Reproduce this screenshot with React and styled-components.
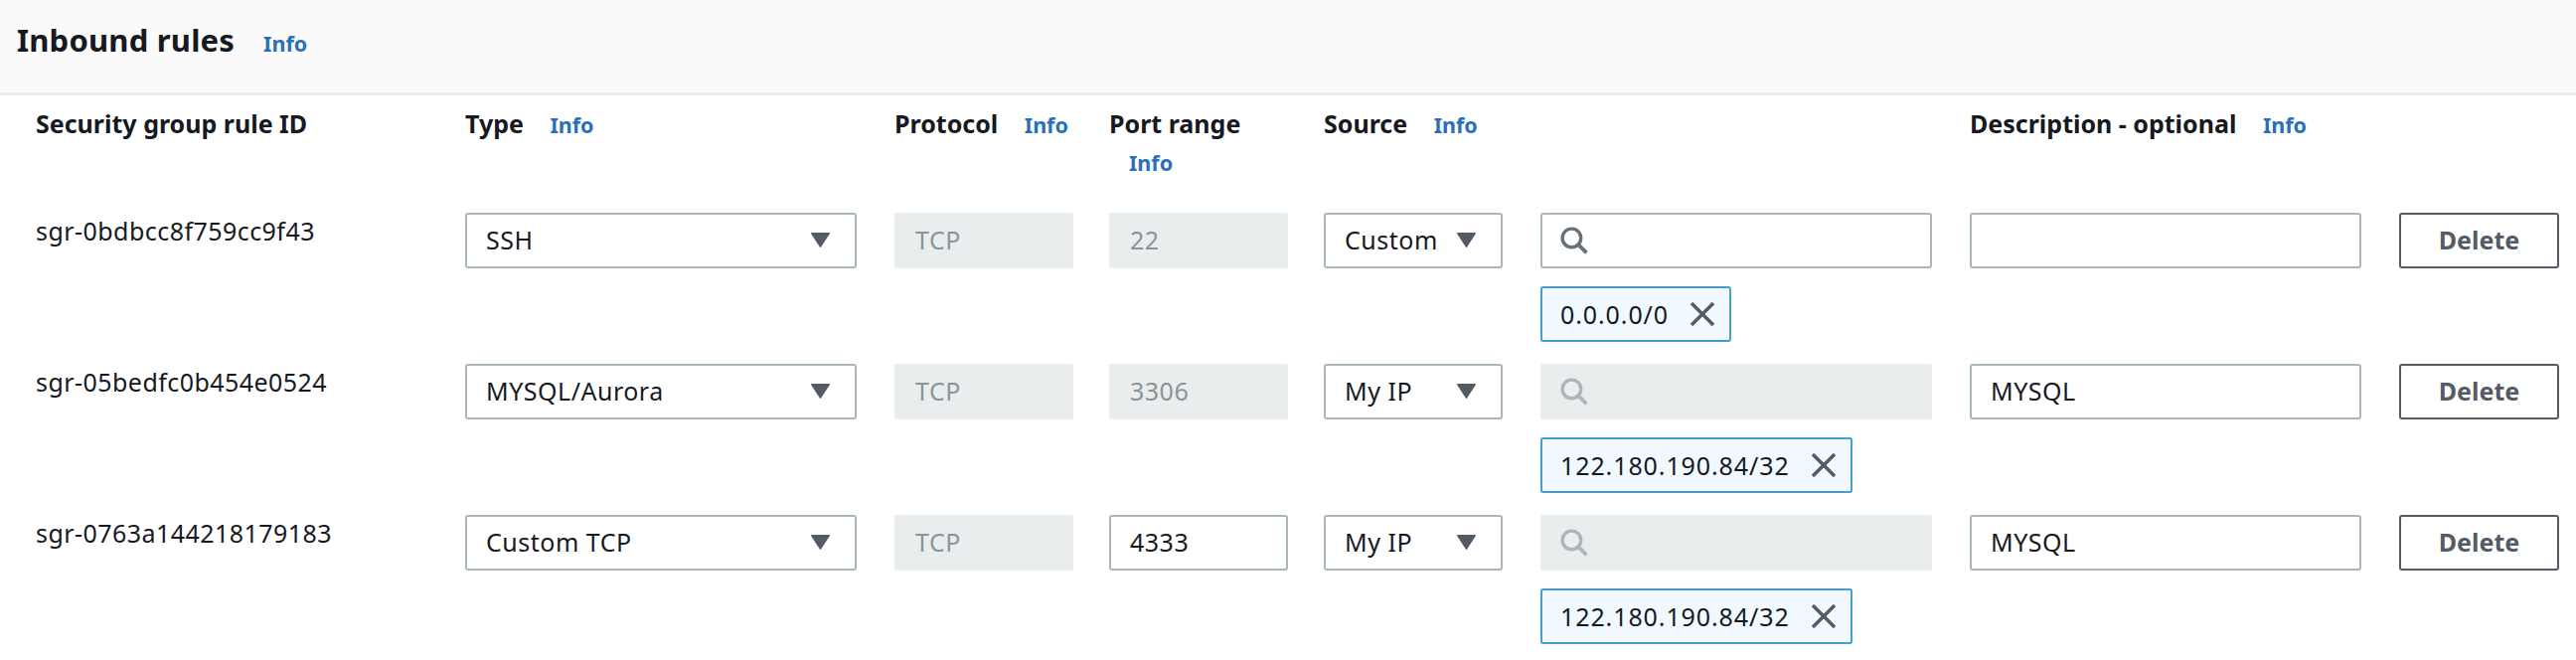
import React from "react";
import styled, { createGlobalStyle } from "styled-components";

const COLUMNS = "396px 396px 180px 180px 182px 396px 396px 161px";

const rules = [
  {
    id: "sgr-0bdbcc8f759cc9f43",
    type: "SSH",
    port: "22",
    portLocked: true,
    source: "Custom",
    searchLocked: false,
    cidr: "0.0.0.0/0",
    description: "",
  },
  {
    id: "sgr-05bedfc0b454e0524",
    type: "MYSQL/Aurora",
    port: "3306",
    portLocked: true,
    source: "My IP",
    searchLocked: true,
    cidr: "122.180.190.84/32",
    description: "MYSQL",
  },
  {
    id: "sgr-0763a144218179183",
    type: "Custom TCP",
    port: "4333",
    portLocked: false,
    source: "My IP",
    searchLocked: true,
    cidr: "122.180.190.84/32",
    description: "MYSQL",
  },
];

const Caret = () => (
  <CaretIcon viewBox="0 0 19 15" aria-hidden="true">
    <path d="M0.8 0.8h17.4l-8.7 13.4z" fill="#545b64" stroke="#545b64" strokeWidth="1.5" strokeLinejoin="round" />
  </CaretIcon>
);

const SearchIcon = ({ muted }) => (
  <SearchSvg viewBox="0 0 27 27" aria-hidden="true">
    <circle cx="11" cy="11" r="9" fill="none" stroke={muted ? "#aab7b8" : "#687078"} strokeWidth="3.2" />
    <path d="M17.5 17.5L25.5 25.5" fill="none" stroke={muted ? "#aab7b8" : "#687078"} strokeWidth="3.6" />
  </SearchSvg>
);

const CloseIcon = () => (
  <CloseSvg viewBox="0 0 24 24" aria-hidden="true">
    <path d="M1 1l22 22M23 1L1 23" fill="none" stroke="#545b64" strokeWidth="3.4" />
  </CloseSvg>
);

const App = () => {
  return (
    <Page>
      <GlobalStyle />
      <Header>
        <Title>Inbound rules</Title>
        <TitleInfo>Info</TitleInfo>
      </Header>
      <Table>
        <Labels>
          <Label>Security group rule ID</Label>
          <Label>
            Type <InfoLink>Info</InfoLink>
          </Label>
          <Label>
            Protocol <InfoLink>Info</InfoLink>
          </Label>
          <Label>
            Port range <InfoLink>Info</InfoLink>
          </Label>
          <Label>
            Source <InfoLink>Info</InfoLink>
          </Label>
          <div />
          <Label $wide>
            Description - optional <InfoLink>Info</InfoLink>
          </Label>
          <div />
        </Labels>
        {rules.map((rule) => (
          <Row key={rule.id}>
            <RuleId>{rule.id}</RuleId>
            <Select $width={394}>
              {rule.type}
              <Caret />
            </Select>
            <Field $locked>TCP</Field>
            <Field $locked={rule.portLocked}>{rule.port}</Field>
            <Select $width={180}>
              {rule.source}
              <Caret />
            </Select>
            <SearchCell>
              <Field $locked={rule.searchLocked} $width={394}>
                <SearchIcon muted={rule.searchLocked} />
              </Field>
              <Token>
                {rule.cidr}
                <CloseIcon />
              </Token>
            </SearchCell>
            <Field $width={394}>{rule.description}</Field>
            <DeleteButton>Delete</DeleteButton>
          </Row>
        ))}
      </Table>
    </Page>
  );
};

const GlobalStyle = createGlobalStyle`
  html, body {
    margin: 0;
    background: #fff;
  }
  body {
    font-family: "Noto Sans", "Liberation Sans", sans-serif;
    color: #16191f;
  }
`;

const Page = styled.div`
  width: 2592px;
  height: 664px;
  overflow: hidden;
  background: #fff;
`;

const Header = styled.div`
  box-sizing: border-box;
  height: 96px;
  background: #fafafa;
  border-bottom: 3px solid #eaeded;
  display: flex;
  align-items: flex-start;
  padding: 19px 0 0 17px;
`;

const Title = styled.h2`
  margin: 0;
  font-size: 31px;
  line-height: 42px;
  font-weight: 700;
  letter-spacing: 0.2px;
`;

const InfoLink = styled.a`
  margin-left: 20px;
  font-size: 21.5px;
  font-weight: 700;
  color: #2a6fb8;
`;

const TitleInfo = styled(InfoLink)`
  margin-left: 29px;
  margin-top: 11px;
  line-height: 28px;
`;

const Table = styled.div`
  padding: 9px 0 0 36px;
`;

const Labels = styled.div`
  display: grid;
  grid-template-columns: ${COLUMNS};
  column-gap: 36px;
  height: 109px;
`;

const Label = styled.div`
  font-size: 25px;
  line-height: 38px;
  font-weight: 700;
  ${(p) => p.$wide && "white-space: nowrap;"}
`;

const Row = styled.div`
  display: grid;
  grid-template-columns: ${COLUMNS};
  column-gap: 36px;
  align-items: start;
  height: 152px;
`;

const RuleId = styled.div`
  font-size: 25px;
  line-height: 36px;
  letter-spacing: 0.45px;
`;

const Field = styled.div`
  box-sizing: border-box;
  width: ${(p) => (p.$width ? `${p.$width}px` : "100%")};
  height: 56px;
  display: flex;
  align-items: center;
  padding: 0 19px 2px;
  font-size: 25px;
  letter-spacing: 0.5px;
  border-radius: 3px;
  border: 2px solid ${(p) => (p.$locked ? "#eaeded" : "#aab7b8")};
  background: ${(p) => (p.$locked ? "#eaeded" : "#fff")};
  color: ${(p) => (p.$locked ? "#879596" : "#16191f")};
`;

const Select = styled(Field)`
  justify-content: space-between;
  padding-right: 25px;
`;

const CaretIcon = styled.svg`
  width: 19px;
  height: 15px;
  flex: none;
`;

const SearchSvg = styled.svg`
  width: 28px;
  height: 28px;
  flex: none;
  margin: 2px 0 0 -1px;
`;

const CloseSvg = styled.svg`
  width: 24px;
  height: 24px;
  flex: none;
  margin-left: 22px;
`;

const SearchCell = styled.div`
  display: flex;
  flex-direction: column;
  align-items: flex-start;
  gap: 18px;
`;

const Token = styled.div`
  box-sizing: border-box;
  height: 56px;
  display: flex;
  align-items: center;
  padding: 0 15px 0 18px;
  font-size: 25px;
  letter-spacing: 0.9px;
  border: 2px solid #44a0c8;
  border-radius: 3px;
  background: #f1f9fe;
`;

const DeleteButton = styled.button`
  box-sizing: border-box;
  height: 56px;
  width: 161px;
  padding: 0 0 2px;
  font-family: inherit;
  font-size: 25px;
  font-weight: 700;
  color: #545b64;
  background: #fff;
  border: 2px solid #545b64;
  border-radius: 3px;
`;

export default App;
